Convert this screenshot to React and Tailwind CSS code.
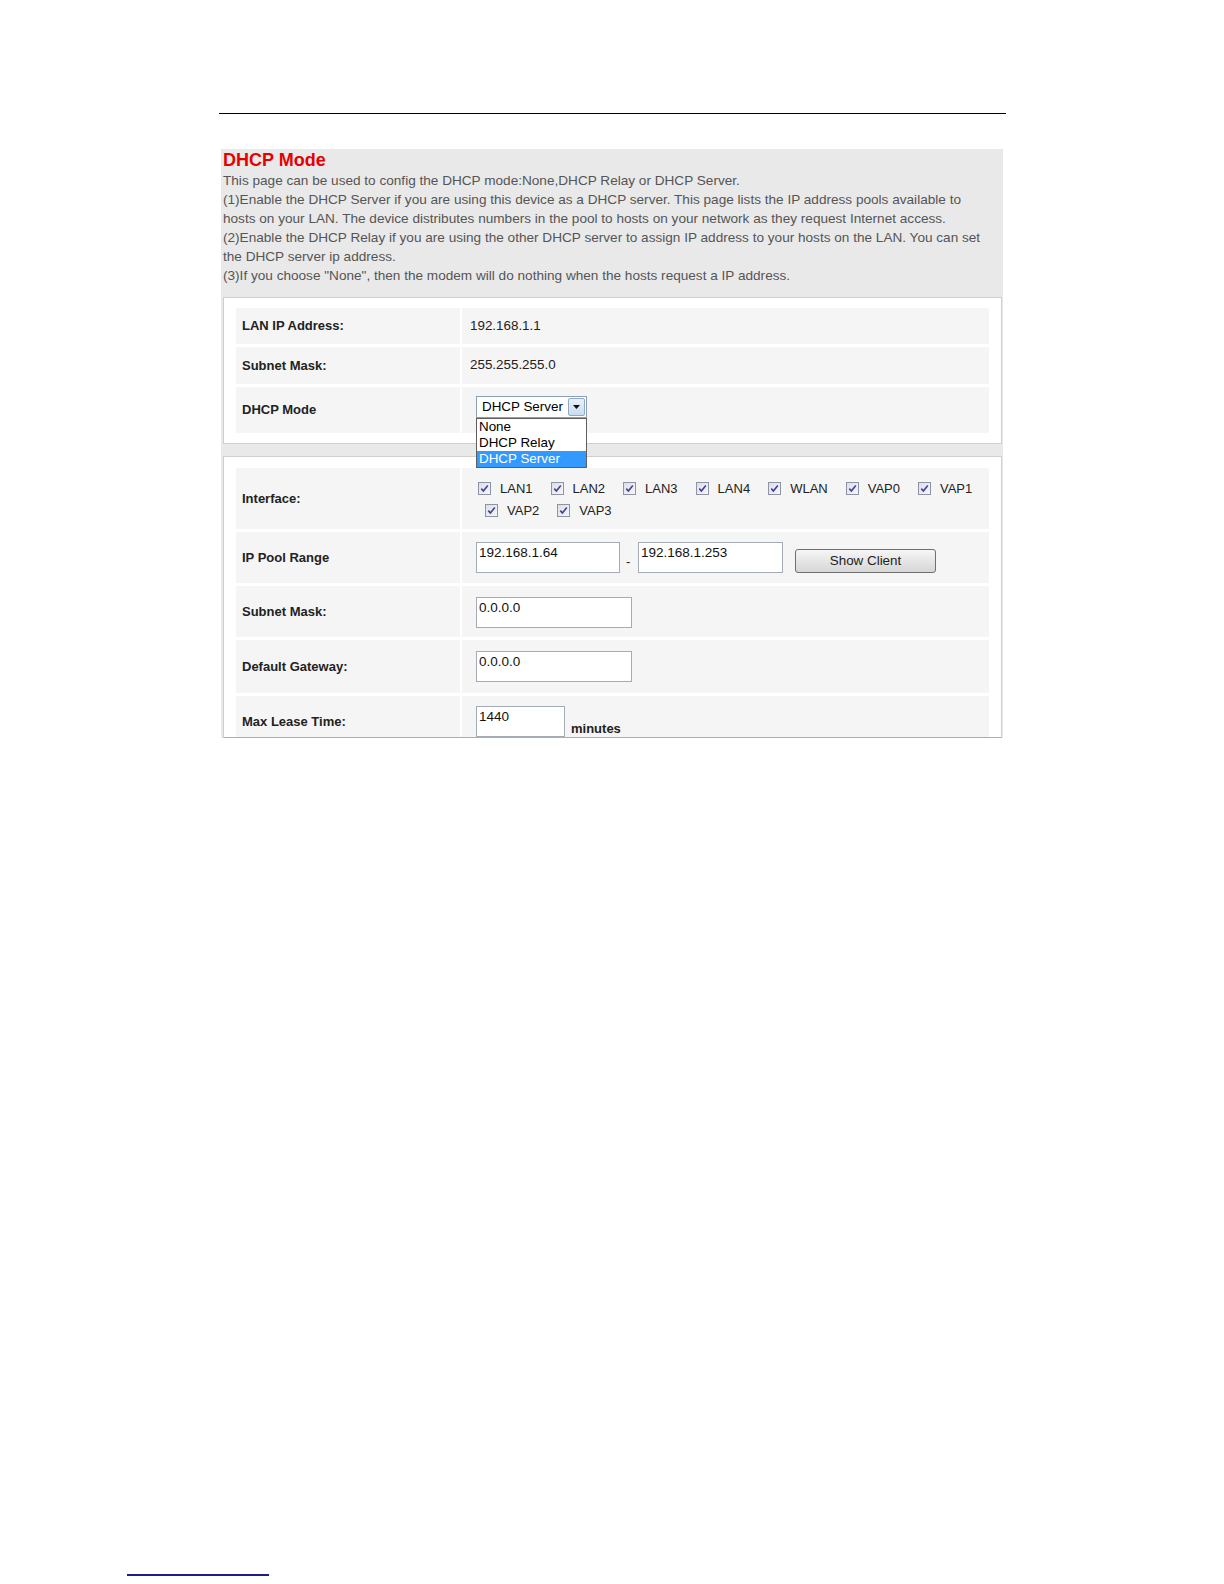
import React from "react";

const font = { fontFamily: '"Liberation Sans", Arial, sans-serif' };

const Check = () => (
  <svg width="13" height="13" viewBox="0 0 13 13" className="shrink-0 -translate-y-[1px]">
    <defs>
      <linearGradient id="cbg" x1="0" y1="0" x2="1" y2="1">
        <stop offset="0" stopColor="#dcdce4" />
        <stop offset="1" stopColor="#f8f8fb" />
      </linearGradient>
    </defs>
    <rect x="0.5" y="0.5" width="12" height="12" fill="url(#cbg)" stroke="#8e94a6" />
    <path d="M3.3 6.6 L5.4 9 L9.8 3.6" fill="none" stroke="#3f3f9e" strokeWidth="1.6" />
  </svg>
);

const Box = ({ name }) => (
  <span className="inline-flex items-center mr-[18px]">
    <Check />
    <span className="ml-[9px]">{name}</span>
  </span>
);

const Field = ({ value, w }) => (
  <div className={`${w} h-[31px] bg-white border border-[#a5acb5] pl-[2px] pt-[2px] leading-[16px] text-[13.5px] text-[#111]`}>
    {value}
  </div>
);

const Row = ({ label, h, cell, children }) => (
  <div className={`grid grid-cols-[224px_527px] gap-x-[2px] ${h}`}>
    <div className="bg-[#f5f5f5] flex items-center pl-[6px] font-bold text-[13px] text-[#222]">
      {label}
    </div>
    <div className={`bg-[#f5f5f5] ${cell}`}>{children}</div>
  </div>
);

export default function App() {
  return (
    <div style={font} className="w-[1224px] h-[1584px] bg-white flex flex-col">
      <div className="pt-[113px] pl-[219px]">
        <div className="w-[787px] h-px bg-black" />

        <div className="mt-[35px] ml-[2px] w-[782px] bg-[#e9e9e9]">
          <h1 className="pl-[2px] pt-[1px] pb-[1px] text-[18px] leading-[20px] font-bold text-[#e60000]">DHCP Mode</h1>
          <p className="pl-[2px] text-[13.6px] leading-[19px] text-[#555] whitespace-nowrap">
            This page can be used to config the DHCP mode:None,DHCP Relay or DHCP Server.
            <br />
            (1)Enable the DHCP Server if you are using this device as a DHCP server. This page lists the IP address pools available to
            <br />
            hosts on your LAN. The device distributes numbers in the pool to hosts on your network as they request Internet access.
            <br />
            (2)Enable the DHCP Relay if you are using the other DHCP server to assign IP address to your hosts on the LAN. You can set
            <br />
            the DHCP server ip address.
            <br />
            (3)If you choose "None", then the modem will do nothing when the hosts request a IP address.
          </p>

          <div className="mt-[12px] ml-[2px] w-[779px] bg-white border border-[#cfcfcf] px-[12px] pt-[10px] pb-[10px] flex flex-col gap-y-[3px]">
            <Row label="LAN IP Address:" h="h-[36px]" cell="flex items-center pl-[8px] text-[13.4px] text-[#222]">
              192.168.1.1
            </Row>
            <Row label="Subnet Mask:" h="h-[37px]" cell="flex items-center pl-[8px] text-[13.4px] text-[#222]">
              255.255.255.0
            </Row>
            <Row label="DHCP Mode" h="h-[46px]" cell="pl-[14px] pt-[9px]">
              <div className="relative w-[111px]">
                <div className="h-[22px] bg-white border border-[#8aa0b8] flex items-center text-[13.4px] text-black">
                  <span className="pl-[5px] flex-1">DHCP Server</span>
                  <span className="w-[17px] h-[18px] mr-px bg-gradient-to-b from-[#e8f1fb] to-[#c9dcf0] border border-[#8fa9c6] rounded-[2px] flex items-center justify-center">
                    <svg width="7" height="4" viewBox="0 0 7 4">
                      <path d="M0 0 L7 0 L3.5 4 Z" fill="#111" />
                    </svg>
                  </span>
                </div>
                <ul className="absolute z-10 top-full left-0 w-[111px] bg-white border border-[#5f5f5f] text-[13.4px] leading-[16px] text-black">
                  <li className="pl-[2px]">None</li>
                  <li className="pl-[2px]">DHCP Relay</li>
                  <li className="pl-[2px] bg-[#3399ff] text-white">DHCP Server</li>
                </ul>
              </div>
            </Row>
          </div>

          <div className="mt-[12px] ml-[2px] w-[779px] h-[282px] overflow-hidden bg-white border border-[#cfcfcf] border-b-[#9fb0c4] px-[12px] pt-[11px] flex flex-col gap-y-[3px]">
            <Row label="Interface:" h="h-[61px] shrink-0" cell="pt-[10px] text-[13px] text-[#222]">
              <div className="h-[22px] flex items-center pl-[16px]">
                <Box name="LAN1" />
                <Box name="LAN2" />
                <Box name="LAN3" />
                <Box name="LAN4" />
                <Box name="WLAN" />
                <Box name="VAP0" />
                <Box name="VAP1" />
              </div>
              <div className="h-[22px] flex items-center pl-[23px]">
                <Box name="VAP2" />
                <Box name="VAP3" />
              </div>
            </Row>
            <Row label="IP Pool Range" h="h-[51px] shrink-0" cell="pl-[14px] pt-[10px] flex items-end pb-[10px]">
              <Field value="192.168.1.64" w="w-[144px]" />
              <span className="w-[18px] pl-[6px] text-[13px] text-[#222] leading-none mb-[5px]">-</span>
              <Field value="192.168.1.253" w="w-[145px]" />
              <button className="ml-[12px] w-[141px] h-[24px] rounded-[3px] border border-[#707070] bg-gradient-to-b from-[#f6f6f6] to-[#d6d6d6] text-[13.4px] text-[#222]">
                Show Client
              </button>
            </Row>
            <Row label="Subnet Mask:" h="h-[51px] shrink-0" cell="pl-[14px] pt-[11px]">
              <Field value="0.0.0.0" w="w-[156px]" />
            </Row>
            <Row label="Default Gateway:" h="h-[53px] shrink-0" cell="pl-[14px] pt-[11px]">
              <Field value="0.0.0.0" w="w-[156px]" />
            </Row>
            <Row label="Max Lease Time:" h="h-[51px] shrink-0" cell="pl-[14px] pt-[10px] flex items-start">
              <Field value="1440" w="w-[89px]" />
              <span className="ml-[6px] mt-[15px] leading-[16px] font-bold text-[13px] text-[#222]">minutes</span>
            </Row>
          </div>
        </div>
      </div>

      <div className="mt-auto mb-[8px] ml-[127px] w-[142px] h-[2px] bg-[#1c1c8c]" />
    </div>
  );
}
